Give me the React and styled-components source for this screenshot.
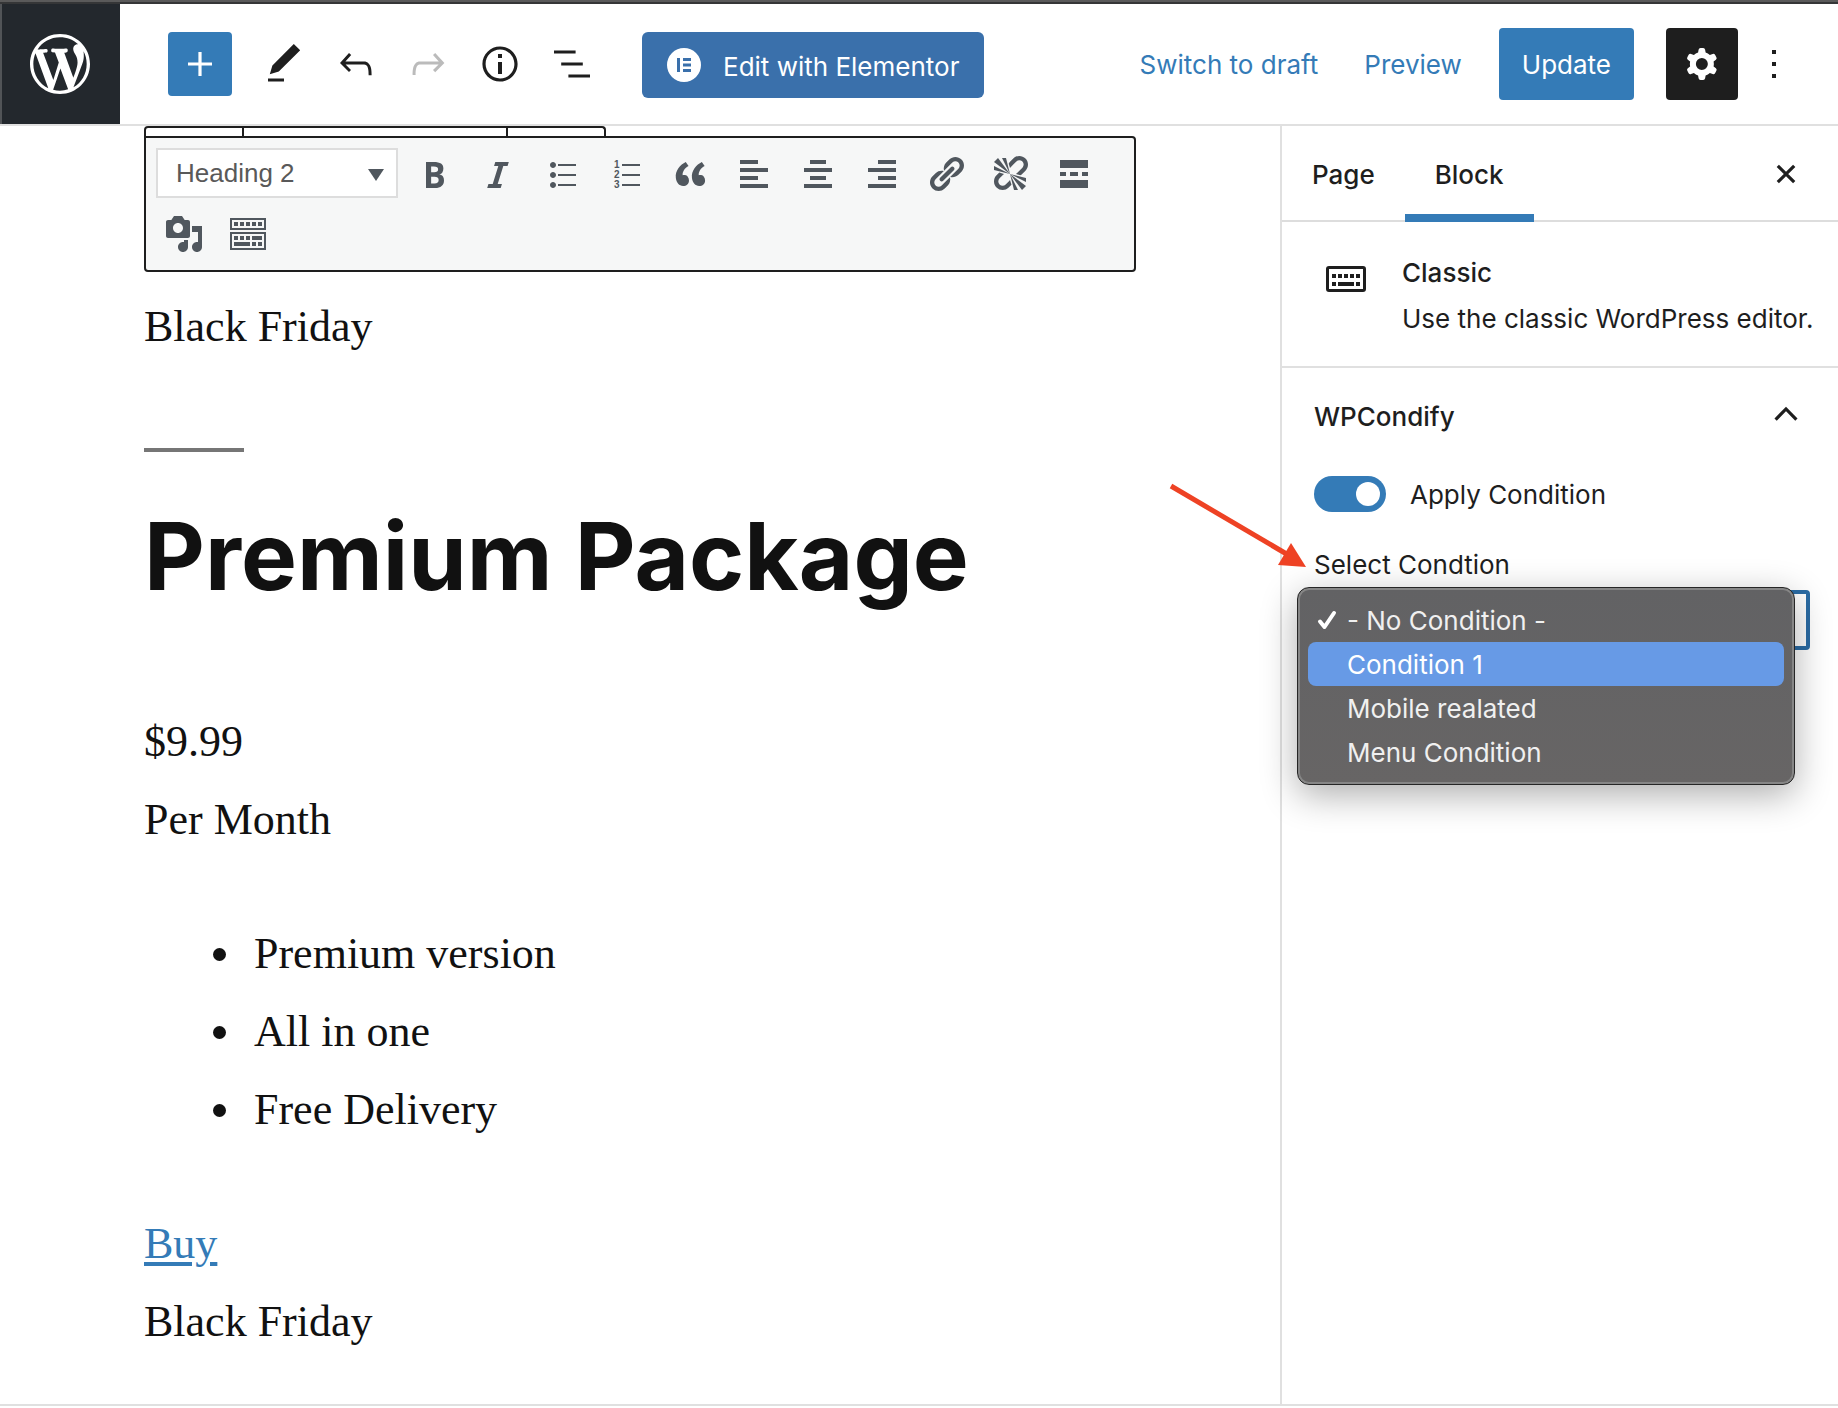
import React, { useState } from "react";
import styled, { createGlobalStyle, css } from "styled-components";

const ink = "#1e1e1e";
const blue = "#347bb7";
const line = "#e0e0e0";
const slate = "#50575e";

const GlobalStyle = createGlobalStyle`
  *, *::before, *::after { box-sizing: border-box; }
  body {
    margin: 0;
    background: #fff;
    color: ${ink};
    font-family: Inter, "Liberation Sans", sans-serif;
    font-size: 26px;
    line-height: 36px;
  }
  button, select, input { font: inherit; color: inherit; margin: 0; }
`;

const Page = styled.div`
  position: relative;
  display: flex;
  flex-direction: column;
  min-height: 100vh;
  border-top: 2px solid #5a5a5a;
`;

const Header = styled.header`
  display: flex;
  align-items: center;
  border-top: 2px solid #353637;
  border-bottom: 2px solid ${line};
  padding-right: 28px;
`;

const HomeLink = styled.a`
  display: flex;
  align-items: center;
  justify-content: center;
  width: 120px;
  height: 120px;
  background: #23282d;
  box-shadow: inset 2px 0 0 0 #515457;
  color: #fff;
`;

const Tools = styled.div`
  display: flex;
  align-items: center;
  flex: 1;
  padding-left: 48px;
`;

const Actions = styled.div`
  display: flex;
  align-items: center;
`;

const IconButton = styled.button`
  display: flex;
  align-items: center;
  justify-content: center;
  width: 72px;
  height: 72px;
  padding: 0;
  border: 0;
  border-radius: 4px;
  background: ${(p) => (p.$pressed ? ink : "transparent")};
  color: ${(p) => (p.$pressed ? "#fff" : p.disabled ? "#bbb" : ink)};
`;

const InsertButton = styled(IconButton)`
  width: 64px;
  height: 64px;
  margin-right: 16px;
  background: ${blue};
  color: #fff;
`;

const ElementorButton = styled.button`
  display: flex;
  align-items: center;
  gap: 22px;
  height: 66px;
  margin: 2px 0 0 34px;
  padding: 0 25px;
  border: 0;
  border-radius: 6px;
  background: #3a70ab;
  color: #fff;
  white-space: nowrap;
`;

const ElementorLabel = styled.span`
  padding-top: 4px;
`;

const TextButton = styled.button`
  padding: 2px 23px 0;
  height: 72px;
  border: 0;
  background: transparent;
  color: ${blue};
  white-space: nowrap;
`;

const UpdateButton = styled(TextButton)`
  margin: 0 32px 0 14px;
  border-radius: 4px;
  background: ${blue};
  color: #fff;
`;

const Body = styled.div`
  display: flex;
  flex: 1;
`;

const Editor = styled.main`
  flex: 1;
  min-width: 0;
  padding: 0 144px 42px;
  color: #111;
  font-family: "Liberation Serif", serif;
  font-size: 44px;
  line-height: 78px;
`;

const BlockToolbar = styled.div`
  display: grid;
  grid-template-columns: 96px 264px 98px;
  width: 462px;
  height: 10px;
  border: 2px solid ${ink};
  border-bottom: 0;
  border-radius: 4px 4px 0 0;
`;

const ToolbarGroup = styled.div`
  & + & { border-left: 2px solid ${ink}; }
`;

const ClassicToolbar = styled.div`
  display: flex;
  flex-wrap: wrap;
  align-items: flex-start;
  padding: 6px;
  margin-bottom: 16px;
  border: 2px solid ${ink};
  border-radius: 0 4px 4px 4px;
  background: #f6f7f7;
  color: ${slate};
`;

const FormatBox = styled.div`
  display: grid;
  align-items: center;
  width: 242px;
  margin: 4px;
  & > * { grid-area: 1 / 1; }
  & > svg { justify-self: end; margin-right: 12px; pointer-events: none; }
`;

const FormatSelect = styled.select`
  appearance: none;
  width: 100%;
  height: 50px;
  padding: 0 18px;
  border: 2px solid #ddd;
  border-radius: 0;
  background: #fff;
  color: #595959;
  font-family: "Liberation Sans", sans-serif;
  font-size: 26px;
  line-height: 36px;
`;

const FormatButton = styled.button`
  display: flex;
  align-items: center;
  justify-content: center;
  width: 64px;
  height: 60px;
  padding: 0;
  border: 0;
  background: transparent;
  color: inherit;
`;

const Paragraph = styled.p`
  margin: 0;
`;

const Separator = styled.hr`
  width: 100px;
  height: 4px;
  margin: 82px 0 44px;
  border: 0;
  background: #767676;
`;

const Heading = styled.h2`
  margin: 0 0 87px;
  font-family: Inter, "Liberation Sans", sans-serif;
  font-size: 94px;
  font-weight: 700;
  line-height: 120px;
`;

const List = styled.ul`
  margin: 56px 0;
  padding-left: 102px;
`;

const ListItem = styled.li`
  padding-left: 8px;
`;

const BuyLink = styled.a`
  color: ${blue};
  text-decoration: underline;
  text-decoration-thickness: 4px;
  text-underline-offset: 4px;
`;

const Sidebar = styled.aside`
  flex: 0 0 558px;
  min-width: 0;
  border-left: 2px solid ${line};
`;

const TabRow = styled.div`
  display: flex;
  align-items: center;
  justify-content: space-between;
  height: 96px;
  border-bottom: 2px solid #ddd;
  padding: 2px 16px 0 0;
`;

const Tabs = styled.div`
  display: flex;
  align-self: stretch;
  margin-bottom: -2px;
`;

const Tab = styled.button`
  padding: 0 30px;
  border: 0;
  background: transparent;
  font-weight: 500;
  ${(p) => p.$active && css`box-shadow: inset 0 -8px 0 0 ${blue};`}
`;

const Card = styled.section`
  display: flex;
  gap: 32px;
  padding: 33px 24px 29px 40px;
  border-bottom: 2px solid ${line};
`;

const CardIcon = styled.span`
  display: flex;
  flex: none;
  width: 48px;
  height: 48px;
`;

const CardTitle = styled.h2`
  margin: 0 0 10px;
  font-size: 26px;
  font-weight: 500;
  line-height: 36px;
`;

const CardText = styled.p`
  margin: 0;
`;

const Panel = styled.section`
  padding: 0 28px 32px 32px;
`;

const PanelTitle = styled.h2`
  margin: 0;
  font-size: 26px;
  font-weight: 500;
`;

const PanelToggle = styled.button`
  display: flex;
  align-items: center;
  justify-content: space-between;
  width: 100%;
  height: 96px;
  padding: 2px 0 0;
  border: 0;
  background: transparent;
  font-weight: 500;
  text-align: left;
`;

const ToggleRow = styled.div`
  display: flex;
  align-items: center;
  gap: 24px;
  margin: 11px 0 34px;
`;

const ToggleLabel = styled.label`
  padding-top: 2px;
`;

const Switch = styled.input`
  appearance: none;
  display: flex;
  align-items: center;
  width: 72px;
  height: 36px;
  padding: 6px;
  border-radius: 18px;
  background: #949494;
  &::before {
    content: "";
    width: 24px;
    height: 24px;
    border-radius: 50%;
    background: #fff;
  }
  &:checked {
    justify-content: flex-end;
    background: ${blue};
  }
`;

const Field = styled.div`
  position: relative;
  display: flex;
  flex-direction: column;
  gap: 7px;
`;

const ConditionSelect = styled.select`
  appearance: none;
  width: 100%;
  height: 60px;
  padding: 0 20px;
  border: 4px solid #2b6ca5;
  border-radius: 4px;
  background: #fff;
  outline: 0;
`;

const Menu = styled.ul`
  position: absolute;
  top: 40px;
  left: -17px;
  right: 15px;
  margin: 0;
  padding: 10px;
  list-style: none;
  border: 1px solid #262626;
  border-radius: 12px;
  background: linear-gradient(#626264, #676565);
  box-shadow: inset 0 0 0 2px #868686, 0 10px 36px rgba(0, 0, 0, 0.32);
  color: #f0f0f0;
`;

const MenuItem = styled.li`
  display: grid;
  grid-template-columns: 20px 1fr;
  align-items: center;
  gap: 10px;
  height: 44px;
  padding: 2px 0 0 9px;
  border-radius: 8px;
  ${(p) => p.$highlighted && css`background: #679ae6; color: #fff;`}
`;

const Pointer = styled.svg`
  position: absolute;
  top: -110px;
  left: -146px;
  pointer-events: none;
`;

const Footer = styled.footer`
  height: 4px;
  border-top: 2px solid ${line};
`;

const Glyph = ({ size = 48, box = 24, d, children }) => (
  <svg width={size} height={size} viewBox={`0 0 ${box} ${box}`} fill="currentColor" fillRule="evenodd" aria-hidden="true">
    {d ? <path d={d} /> : children}
  </svg>
);

const wpIcons = {
  logo: "M20 10c0-5.51-4.49-10-10-10C4.48 0 0 4.49 0 10c0 5.52 4.48 10 10 10 5.51 0 10-4.48 10-10zM7.78 15.37L4.37 6.22c.55-.02 1.17-.08 1.17-.08.5-.06.44-1.13-.06-1.11 0 0-1.45.11-2.37.11-.18 0-.37 0-.58-.01C4.12 2.69 6.87 1.11 10 1.11c2.33 0 4.45.87 6.05 2.34-.68-.11-1.65.39-1.65 1.58 0 .74.45 1.36.9 2.1.35.61.55 1.36.55 2.46 0 1.49-1.4 5-1.4 5l-3.03-8.37c.54-.02.82-.17.82-.17.5-.05.44-1.25-.06-1.22 0 0-1.44.12-2.38.12-.87 0-2.33-.12-2.33-.12-.5-.03-.56 1.2-.06 1.22l.92.08 1.26 3.41zM17.41 10c.24-.64.74-1.87.43-4.25.7 1.29 1.05 2.71 1.05 4.25 0 3.29-1.73 6.24-4.4 7.78.97-2.59 1.94-5.2 2.92-7.78zM6.1 18.09C3.12 16.65 1.11 13.53 1.11 10c0-1.3.23-2.48.72-3.59C3.25 10.3 4.67 14.2 6.1 18.09zm4.03-6.63l2.58 6.98c-.86.29-1.76.45-2.71.45-.79 0-1.57-.11-2.29-.33.81-2.38 1.62-4.74 2.42-7.1z",
  plus: "M18 11.2h-5.2V6h-1.6v5.2H6v1.6h5.2V18h1.6v-5.2H18z",
  edit: "M20.1 5.1L16.9 2 6.2 12.7l-1.3 4.4 4.5-1.3L20.1 5.1zM4 20.8h8v-1.5H4v1.5z",
  undo: "M18.3 11.7c-.6-.6-1.4-.9-2.3-.9H6.7l2.9-3.3-1.1-1-4.5 5L8.5 16l1-1-2.7-2.7H16c.5 0 .9.2 1.3.5 1 1 1 3.4 1 4.5v.3h1.5v-.2c0-1.5 0-4.3-1.5-5.7z",
  redo: "M15.6 6.5l-1.1 1 2.9 3.3H8c-.9 0-1.7.3-2.3.9-1.4 1.5-1.4 4.2-1.4 5.6v.2h1.5v-.3c0-1.1 0-3.5 1-4.5.3-.3.7-.5 1.3-.5h9.2L14.5 15l1.1 1.1 4.6-4.6-4.6-5z",
  info: "M12 3.2c-4.8 0-8.8 3.9-8.8 8.8 0 4.8 3.9 8.8 8.8 8.8 4.8 0 8.8-3.9 8.8-8.8 0-4.8-4-8.8-8.8-8.8zm0 16c-4 0-7.2-3.3-7.2-7.2C4.8 8 8 4.8 12 4.8s7.2 3.3 7.2 7.2c0 4-3.2 7.2-7.2 7.2zM11 17h2v-6h-2v6zm0-8h2V7h-2v2z",
  outline: "M13.8 5.2H3v1.5h10.8V5.2zm-3.6 12v1.5H21v-1.5H10.2zm7.2-6H6.6v1.5h10.8v-1.5z",
  cog: "M10.289 4.836A1 1 0 0111.275 4h1.306a1 1 0 01.987.836l.244 1.466c.787.26 1.503.679 2.108 1.218l1.393-.522a1 1 0 011.216.437l.653 1.13a1 1 0 01-.23 1.273l-1.148.944a6.025 6.025 0 010 2.435l1.149.946a1 1 0 01.23 1.272l-.653 1.13a1 1 0 01-1.216.437l-1.394-.522c-.605.54-1.32.958-2.108 1.218l-.244 1.466a1 1 0 01-.987.836h-1.306a1 1 0 01-.986-.836l-.244-1.466a5.995 5.995 0 01-2.108-1.218l-1.394.522a1 1 0 01-1.217-.436l-.653-1.131a1 1 0 01.23-1.272l1.149-.946a6.026 6.026 0 010-2.435l-1.148-.944a1 1 0 01-.23-1.272l.653-1.131a1 1 0 011.217-.437l1.393.522a5.994 5.994 0 012.108-1.218l.244-1.466zM14.929 12a3 3 0 11-6 0 3 3 0 016 0z",
  more: "M13 19h-2v-2h2v2zm0-6h-2v-2h2v2zm0-6h-2V5h2v2z",
};

const formatIcons = [
  ["Bold", "M6 4v13h4.54c1.37 0 2.46-.33 3.26-1 .8-.66 1.2-1.58 1.2-2.77 0-.84-.17-1.51-.51-2.01s-.9-.85-1.67-1.03v-.09c.57-.1 1.02-.4 1.36-.9s.51-1.13.51-1.91c0-1.14-.39-1.98-1.17-2.5C12.75 4.26 11.5 4 9.78 4H6zm2.57 5.15V6.26h1.36c.73 0 1.27.11 1.61.32.34.22.51.58.51 1.07 0 .54-.16.92-.47 1.15s-.82.35-1.51.35h-1.5zm0 2.19h1.6c1.44 0 2.16.53 2.16 1.61 0 .6-.17 1.05-.51 1.34s-.86.43-1.57.43H8.57v-3.38z"],
  ["Italic", "M14.78 6h-2.13l-2.8 9h2.12l-.62 2H4.6l.62-2h2.14l2.8-9H8.03l.62-2h6.75z"],
  ["Bulleted list", "M5.5 7C4.67 7 4 6.33 4 5.5 4 4.68 4.67 4 5.5 4 6.32 4 7 4.68 7 5.5 7 6.33 6.32 7 5.5 7zM8 5h9v1H8V5zm-2.5 7c-.83 0-1.5-.67-1.5-1.5C4 9.68 4.67 9 5.5 9c.82 0 1.5.68 1.5 1.5 0 .83-.68 1.5-1.5 1.5zM8 10h9v1H8v-1zm-2.5 7c-.83 0-1.5-.67-1.5-1.5 0-.82.67-1.5 1.5-1.5.82 0 1.5.68 1.5 1.5 0 .83-.68 1.5-1.5 1.5zM8 15h9v1H8v-1z"],
  ["Numbered list", null],
  ["Blockquote", "M9.49 13.22c0-.74-.2-1.38-.61-1.9-.62-.78-1.83-.88-2.53-.72-.29-1.65 1.11-3.75 2.92-4.65L7.88 4c-2.73 1.3-5.42 4.28-4.96 8.05C3.21 14.43 4.59 16 6.54 16c.85 0 1.56-.25 2.12-.75s.83-1.18.83-2.03zm8.05 0c0-.74-.2-1.38-.61-1.9-.63-.78-1.83-.88-2.53-.72-.29-1.65 1.11-3.75 2.92-4.65L15.93 4c-2.73 1.3-5.41 4.28-4.95 8.05.29 2.38 1.66 3.95 3.61 3.95.85 0 1.56-.25 2.12-.75s.83-1.18.83-2.03z"],
  ["Align left", "M12 5V3H3v2h9zm5 4V7H3v2h14zm-5 4v-2H3v2h9zm5 4v-2H3v2h14z"],
  ["Align center", "M14 5V3H6v2h8zm3 4V7H3v2h14zm-3 4v-2H6v2h8zm3 4v-2H3v2h14z"],
  ["Align right", "M17 5V3H8v2h9zm0 4V7H3v2h14zm0 4v-2H8v2h9zm0 4v-2H3v2h14z"],
  ["Insert link", "M17.74 2.76c1.68 1.69 1.68 4.41 0 6.1l-1.53 1.52c-1.12 1.12-2.7 1.47-4.14 1.09l2.62-2.61.76-.77.76-.76c.84-.84.84-2.2 0-3.04-.84-.85-2.2-.85-3.04 0l-.77.76-3.38 3.38c-.37-1.44-.02-3.02 1.1-4.14l1.52-1.53c1.69-1.68 4.42-1.68 6.1 0zM8.59 13.43l5.34-5.34c.42-.42.42-1.1 0-1.52-.44-.43-1.13-.39-1.53 0l-5.33 5.34c-.42.42-.42 1.1 0 1.52.44.43 1.13.39 1.52 0zm-.76 2.29l4.14-4.15c.38 1.44.03 3.02-1.09 4.14l-1.52 1.53c-1.69 1.68-4.41 1.68-6.1 0-1.68-1.68-1.68-4.42 0-6.1l1.53-1.52c1.12-1.12 2.7-1.47 4.14-1.1l-4.14 4.15c-.85.84-.85 2.2 0 3.05.84.84 2.2.84 3.04 0z"],
  ["Remove link", "M17.74 2.26c1.68 1.69 1.68 4.41 0 6.1l-1.53 1.52c-.32.33-.69.58-1.08.77L13 10l1.69-1.64.76-.77.76-.76c.84-.84.84-2.2 0-3.04-.84-.85-2.2-.85-3.04 0l-.77.76-.76.76L10 7l-.65-2.14c.19-.38.44-.75.77-1.07l1.52-1.53c1.69-1.68 4.42-1.68 6.1 0zM2 4l8 6-6-8zm4-2l4 8-2-8H6zM2 6l8 4-8-2V6zm7.36 7.69L10 13l.74 2.35-1.38 1.39c-1.69 1.68-4.41 1.68-6.1 0-1.68-1.68-1.68-4.42 0-6.1l1.39-1.38L7 10l-.69.64-1.52 1.53c-.85.84-.85 2.2 0 3.04.84.85 2.2.85 3.04 0zM18 16l-8-6 6 8zm-4 2l-4-8 2 8h2zm4-4l-8-4 8 2v2z"],
  ["Read more", "M17 7V3H3v4h14zM6 11V9H3v2h3zm6 0V9H8v2h4zm5 0V9h-3v2h3zm0 6v-4H3v4h14z"],
  ["Add media", "M13 11V4c0-.55-.45-1-1-1h-1.67L9 1H5L3.67 3H2c-.55 0-1 .45-1 1v7c0 .55.45 1 1 1h10c.55 0 1-.45 1-1zM7 4.5c1.38 0 2.5 1.12 2.5 2.5S8.38 9.5 7 9.5 4.5 8.38 4.5 7 5.62 4.5 7 4.5zM14 6h5v10.5c0 1.38-1.12 2.5-2.5 2.5S14 17.88 14 16.5s1.12-2.5 2.5-2.5c.17 0 .34.02.5.05V9h-3V6zm-4 8.05V13h2v3.5c0 1.38-1.12 2.5-2.5 2.5S7 17.88 7 16.5 8.12 14 9.5 14c.17 0 .34.02.5.05z"],
  ["Toolbar toggle", "M19 2v6H1V2h18zm-1 5V3H2v4h16zM5 4v2H3V4h2zm3 0v2H6V4h2zm3 0v2H9V4h2zm3 0v2h-2V4h2zm3 0v2h-2V4h2zm2 5v9H1V9h18zm-1 8v-7H2v7h16zM5 11v2H3v-2h2zm3 0v2H6v-2h2zm3 0v2H9v-2h2zm6 0v2h-5v-2h5zm-6 3v2H3v-2h8zm3 0v2h-2v-2h2zm3 0v2h-2v-2h2z"],
];

const NumberedListIcon = () => (
  <Glyph size={40} box={20}>
    <path d="M8 5h9v1H8zM8 10h9v1H8zM8 15h9v1H8z" />
    <g fontFamily="Liberation Sans, sans-serif" fontSize="5" fontWeight="700">
      <text x="4" y="7">1</text>
      <text x="4" y="12">2</text>
      <text x="4" y="17">3</text>
    </g>
  </Glyph>
);

const conditions = ["- No Condition -", "Condition 1", "Mobile realated", "Menu Condition"];

export default function App() {
  const [applied, setApplied] = useState(true);
  const [condition, setCondition] = useState(conditions[0]);

  return (
    <Page>
      <GlobalStyle />
      <Header>
        <HomeLink href="#" aria-label="View pages">
          <Glyph size={60} box={20} d={wpIcons.logo} />
        </HomeLink>
        <Tools>
          <InsertButton aria-label="Add block"><Glyph d={wpIcons.plus} /></InsertButton>
          <IconButton aria-label="Tools"><Glyph d={wpIcons.edit} /></IconButton>
          <IconButton aria-label="Undo"><Glyph d={wpIcons.undo} /></IconButton>
          <IconButton aria-label="Redo" disabled><Glyph d={wpIcons.redo} /></IconButton>
          <IconButton aria-label="Details"><Glyph d={wpIcons.info} /></IconButton>
          <IconButton aria-label="Outline"><Glyph d={wpIcons.outline} /></IconButton>
          <ElementorButton>
            <Glyph size={34} box={34}>
              <path d="M17 0a17 17 0 1 0 0 34a17 17 0 1 0 0-34zM10 10h3v14h-3zM16 10h8v3h-8zM16 15.5h8v3h-8zM16 21h8v3h-8z" />
            </Glyph>
            <ElementorLabel>Edit with Elementor</ElementorLabel>
          </ElementorButton>
        </Tools>
        <Actions>
          <TextButton>Switch to draft</TextButton>
          <TextButton>Preview</TextButton>
          <UpdateButton>Update</UpdateButton>
          <IconButton $pressed aria-label="Settings"><Glyph d={wpIcons.cog} /></IconButton>
          <IconButton aria-label="Options"><Glyph d={wpIcons.more} /></IconButton>
        </Actions>
      </Header>

      <Body>
        <Editor>
          <BlockToolbar>
            <ToolbarGroup />
            <ToolbarGroup />
            <ToolbarGroup />
          </BlockToolbar>
          <ClassicToolbar>
            <FormatBox>
              <FormatSelect aria-label="Text format" defaultValue="Heading 2">
                <option>Heading 2</option>
              </FormatSelect>
              <svg width="20" height="20" viewBox="0 0 20 20" fill={slate} aria-hidden="true">
                <path d="M2 6h16l-8 12z" />
              </svg>
            </FormatBox>
            {formatIcons.map(([label, d]) => (
              <FormatButton key={label} aria-label={label}>
                {d ? <Glyph size={40} box={20} d={d} /> : <NumberedListIcon />}
              </FormatButton>
            ))}
          </ClassicToolbar>
          <Paragraph>Black Friday</Paragraph>
          <Separator />
          <Heading>Premium Package</Heading>
          <Paragraph>$9.99</Paragraph>
          <Paragraph>Per Month</Paragraph>
          <List>
            <ListItem>Premium version</ListItem>
            <ListItem>All in one</ListItem>
            <ListItem>Free Delivery</ListItem>
          </List>
          <Paragraph><BuyLink href="#">Buy</BuyLink></Paragraph>
          <Paragraph>Black Friday</Paragraph>
        </Editor>

        <Sidebar>
          <TabRow>
            <Tabs>
              <Tab>Page</Tab>
              <Tab $active>Block</Tab>
            </Tabs>
            <IconButton aria-label="Close settings">
              <Glyph>
                <path d="M7.9 7.9l8.2 8.2M16.1 7.9l-8.2 8.2" fill="none" stroke="currentColor" strokeWidth="1.6" />
              </Glyph>
            </IconButton>
          </TabRow>
          <Card>
            <CardIcon>
              <Glyph>
                <path d="M3.5 5.5h17a1.5 1.5 0 0 1 1.5 1.5v10a1.5 1.5 0 0 1-1.5 1.5h-17a1.5 1.5 0 0 1-1.5-1.5v-10a1.5 1.5 0 0 1 1.5-1.5zM3.5 7v10h17V7zM5 9.500h2v2h-2zM8 9.500h2v2h-2zM11 9.500h2v2h-2zM14 9.500h2v2h-2zM17 9.500h2v2h-2zM5 13.500h2v2h-2zM8 13.500h8v2h-8zM17 13.500h2v2h-2z" />
              </Glyph>
            </CardIcon>
            <div>
              <CardTitle>Classic</CardTitle>
              <CardText>Use the classic WordPress editor.</CardText>
            </div>
          </Card>
          <Panel>
            <PanelTitle>
              <PanelToggle aria-expanded="true">
                WPCondify
                <Glyph>
                  <path d="M6.800 13.300L12 8l5.200 5.300" fill="none" stroke="currentColor" strokeWidth="1.6" />
                </Glyph>
              </PanelToggle>
            </PanelTitle>
            <ToggleRow>
              <Switch id="apply" type="checkbox" checked={applied} onChange={(e) => setApplied(e.target.checked)} />
              <ToggleLabel htmlFor="apply">Apply Condition</ToggleLabel>
            </ToggleRow>
            <Field>
              <label htmlFor="condition">Select Condtion</label>
              <ConditionSelect id="condition" value={condition} onChange={(e) => setCondition(e.target.value)}>
                {conditions.map((name) => <option key={name}>{name}</option>)}
              </ConditionSelect>
              <Menu role="listbox" aria-label="Conditions">
                {conditions.map((name, i) => (
                  <MenuItem
                    key={name}
                    role="option"
                    aria-selected={name === condition}
                    $highlighted={i === 1}
                    onClick={() => setCondition(name)}
                  >
                    <span>
                      {name === condition && (
                        <svg width="20" height="20" viewBox="0 0 20 20" fill="none" stroke="#fff" strokeWidth="4" strokeLinecap="round" strokeLinejoin="round" aria-hidden="true">
                          <path d="M3 11.500L7.500 17L17 3" />
                        </svg>
                      )}
                    </span>
                    {name}
                  </MenuItem>
                ))}
              </Menu>
              <Pointer width="150" height="140" viewBox="0 0 150 140" aria-hidden="true">
                <path d="M3 49L122 119" stroke="#ee4224" strokeWidth="5" />
                <path d="M138 130L110 128L123 106z" fill="#ee4224" />
              </Pointer>
            </Field>
          </Panel>
        </Sidebar>
      </Body>
      <Footer />
    </Page>
  );
}
